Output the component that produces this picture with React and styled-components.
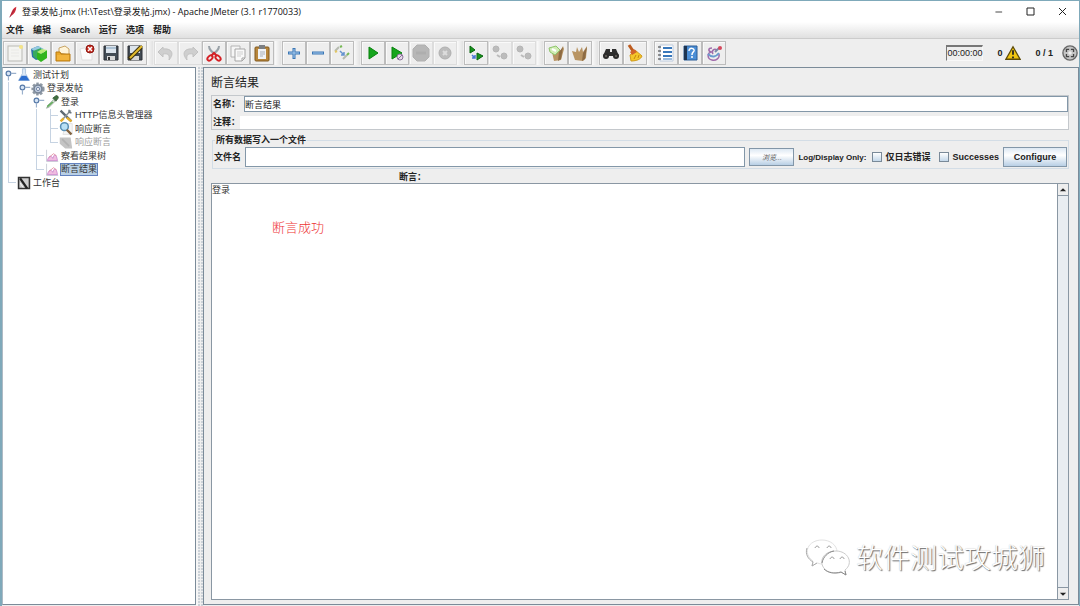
import { useState } from 'react';

import styled, { createGlobalStyle, css } from 'styled-components';

const GlobalStyle = createGlobalStyle`
    *, *::before, *::after {
        box-sizing: border-box;
    }

    body {
        background-color: #eeeeee;
        color: #222222;
        font-family: "Liberation Sans", "Noto Sans CJK SC", sans-serif;
        font-size: 9px;
        line-height: 13px;
        margin: 0;
    }

    button, input, textarea {
        color: inherit;
        font: inherit;
        margin: 0;
    }
`;

const Window = styled.div`
    border: solid #7fa9ba;
    border-width: 1px 1px 0 2px;
    display: flex;
    flex-direction: column;
    min-height: 100vh;
`;

const TitleBar = styled.header`
    align-items: center;
    background-color: #ffffff;
    display: flex;
    gap: 3px;
    height: 21px;
    padding-left: 5px;

    h1 {
        color: #111111;
        flex: 1;
        font-family: "Open Sans", "Noto Sans CJK SC", sans-serif;
        font-size: 9px;
        font-weight: 400;
        margin: 0;
    }
`;

const WindowButton = styled.button`
    background: none;
    border: 0;
    display: grid;
    height: 20px;
    padding: 0;
    place-items: center;
    width: 27px;
`;

const WindowButtons = styled.div`
    display: flex;
    gap: 5px;
    padding-right: 3px;
`;

const MenuBar = styled.nav`
    background-image: linear-gradient(#ffffff, #e0e0e0);
    border-bottom: 1px solid #cccccc;
    display: flex;
    gap: 9px;
    height: 17px;
    padding-left: 4px;

    button {
        background: none;
        border: 0;
        font-weight: 700;
        line-height: 15px;
        padding: 0;
    }
`;

const ToolBar = styled.div`
    align-items: center;
    background-color: #eeeeee;
    display: flex;
    gap: 7px;
    height: 28px;
    padding: 0 1px;
`;

const ToolGroup = styled.div`
    display: flex;
    position: relative;

    &:nth-child(3n) {
        margin-left: 1px;
    }

    & + &::before {
        background-image: linear-gradient(90deg, #fafafa, #e2e2e2);
        content: "";
        height: 24px;
        left: -7px;
        position: absolute;
        width: 6px;
    }
`;

const ToolButton = styled.button`
    background-color: #eeeeee;
    border: 1px solid #bcbcbc;
    box-shadow: inset 1px 1px 0 #fafafa;
    display: grid;
    height: 24px;
    padding: 0;
    place-items: center;
    width: 24px;

    &:disabled {
        border-color: #dddddd;
    }
`;

const Status = styled.div`
    align-items: center;
    display: flex;
    font-weight: 700;
    gap: 14px;
    margin-left: auto;
`;

const Counter = styled.span`
    align-items: center;
    display: flex;
    gap: ${({ $gap }) => $gap}px;
`;

const Timer = styled.output`
    border: solid;
    border-color: #777777 #f8f8f8 #f8f8f8 #777777;
    border-width: 2px 1px 1px 1px;
    font-weight: 400;
    line-height: 13px;
    width: 37px;
`;

const Body = styled.div`
    display: flex;
    flex: 1;
`;

const TreePanel = styled.aside`
    background-color: #ffffff;
    border: 1px solid #7b8b99;
    border-left-color: #aebac4;
    margin-bottom: 1px;
    width: 194px;
`;

const Tree = styled.ul`
    color: #333333;
    list-style: none;
    margin: 0;
    padding: 0;
`;

const TreeRow = styled.li`
    align-items: center;
    display: flex;
    height: 13px;

    &:nth-child(odd) {
        height: 14px;
    }

    button {
        background-color: ${({ $selected }) => $selected ? '#b8cfe5' : 'transparent'};
        border: 1px solid ${({ $selected }) => $selected ? '#6382bf' : 'transparent'};
        color: ${({ $disabled }) => $disabled ? '#a0a0a0' : 'inherit'};
        line-height: 11px;
        padding: 0;
        white-space: nowrap;
    }

    > svg {
        flex: none;
        margin-right: 1px;
    }
`;

const Guide = styled.span`
    align-self: stretch;
    background-repeat: no-repeat;
    flex: none;
    width: 14px;

    ${({ $kind }) => $kind === 'line' && css`
        background-image: linear-gradient(#c6d3e2, #c6d3e2);
        background-position: 5px 0;
        background-size: 1px 100%;
    `}

    ${({ $kind }) => $kind === 'tee' && css`
        background-image: linear-gradient(#c6d3e2, #c6d3e2), linear-gradient(#c6d3e2, #c6d3e2);
        background-position: 5px 0, 5px 6px;
        background-size: 1px 100%, 8px 1px;
    `}

    ${({ $kind }) => $kind === 'end' && css`
        background-image: linear-gradient(#c6d3e2, #c6d3e2), linear-gradient(#c6d3e2, #c6d3e2);
        background-position: 5px 0, 5px 6px;
        background-size: 1px 7px, 8px 1px;
    `}
`;

const Splitter = styled.div`
    background-color: #f0f0f0;
    background-image: radial-gradient(circle at 1px 1px, #ccd2d8 1px, transparent 1px);
    background-size: 3px 3px;
    border-left: 2px solid #f6f6f6;
    width: 7px;
`;

const Main = styled.main`
    border: 1px solid #7b8b99;
    display: flex;
    flex: 1;
    flex-direction: column;
    margin-bottom: 1px;
    padding: 6px 9px 4px 7px;

    h2 {
        font-size: 12px;
        font-weight: 400;
        line-height: 19px;
        margin: 0 0 2px;
    }
`;

const NamePanel = styled.div`
    border: 1px solid #c4c8cc;
    display: grid;
    row-gap: 4px;
`;

const Field = styled.div`
    align-items: center;
    display: flex;
    font-weight: 700;
    gap: ${({ $gap }) => $gap}px;
    padding-left: 1px;
`;

const TextInput = styled.input`
    background-color: #ffffff;
    border: ${({ $plain }) => $plain ? '0' : '1px solid #8397a8'};
    flex: 1;
    font-weight: 400;
    height: ${({ $height }) => $height}px;
    min-width: 0;
    outline: 0;
    padding: 0;
`;

const FilePanel = styled.fieldset`
    border: 1px solid #d3dde6;
    margin: 4px 0 0 1px;
    min-width: 0;
    padding: 0 1px 1px 0;

    legend {
        font-weight: 700;
        line-height: 13px;
        margin-left: 2px;
        padding: 0 1px;
    }
`;

const FileRow = styled.div`
    align-items: center;
    display: flex;
    font-weight: 700;
    gap: 4px;
    padding-left: 1px;
    white-space: nowrap;

    label {
        align-items: center;
        display: flex;
        gap: 3px;
    }

    label + label {
        margin-left: 5px;
    }
`;

const Caption = styled.span`
    font-size: 8px;
    margin-right: 2px;
`;

const CheckBox = styled.input`
    appearance: none;
    background-image: linear-gradient(#ffffff, #c4d8ea);
    border: 1px solid #7a8a99;
    height: 10px;
    width: 10px;

    &:checked {
        background: #33506d;
        box-shadow: inset 0 0 0 2px #ffffff;
    }
`;

const SwingButton = styled.button`
    background-image: linear-gradient(#dde8f3, #ffffff 40%, #b8cfe5);
    border: 1px solid #8296a8;
    font-weight: ${({ $small }) => $small ? 400 : 700};
    height: ${({ $small }) => $small ? 18 : 20}px;
    padding: 0;
    width: ${({ $small }) => $small ? 45 : 64}px;

    span {
        color: #555555;
        font-size: 7px;
        font-style: italic;
    }
`;

const ResultLabel = styled.label`
    font-weight: 700;
    line-height: 12px;
    padding: 2px 0 0 188px;
`;

const ResultPane = styled.div`
    border: 1px solid #8a97a3;
    display: flex;
    flex: 1;
    position: relative;

    textarea {
        background-color: #ffffff;
        border: 0;
        color: #333333;
        flex: 1;
        outline: 0;
        padding: 0;
        resize: none;
    }
`;

const ScrollBar = styled.div`
    background-color: #e9edf1;
    border-left: 1px solid #8a97a3;
    display: flex;
    flex-direction: column;
    justify-content: space-between;
    width: 11px;

    button {
        background-color: #eeeeee;
        border: 0 solid #8a97a3;
        display: grid;
        height: 12px;
        padding: 0;
        place-items: center;
    }

    button:first-child {
        border-bottom-width: 1px;
    }

    button:last-child {
        border-top-width: 1px;
    }
`;

const Note = styled.p`
    color: #ee3333;
    font-family: "Noto Sans CJK SC", sans-serif;
    font-size: 13px;
    font-weight: 300;
    left: 60px;
    line-height: 20px;
    margin: 0;
    position: absolute;
    top: 33px;
`;

const Watermark = styled.div`
    align-items: center;
    bottom: 22px;
    display: flex;
    gap: 5px;
    position: absolute;
    right: 23px;

    p {
        color: #ffffff;
        font-family: "Noto Sans CJK SC", sans-serif;
        font-size: 27px;
        font-weight: 300;
        line-height: 36px;
        margin: 0;
        text-shadow: 1px 1px 1px #666666, 0 0 1px #bbbbbb;
    }
`;

const icons = {
    feather: (
        <>
            <path d="M14 1C9 3 7 8 5 14l-1 3 2-2c5-3 8-8 8-14z" fill="#d22f3a" />
            <path d="M11 5 4 17" stroke="#8b2144" />
        </>
    ),
    file: (
        <>
            <rect x="2" y="2" width="14" height="15" fill="#f4f4f1" stroke="#b9b9b4" />
            <path d="M5 6h8M5 9h8M5 12h8" stroke="#e9e9e6" />
            <circle cx="15" cy="3" r="2" fill="#f5e487" />
        </>
    ),
    templates: (
        <>
            <path d="M1 5l7-3 5 3v9l-7 2-4-3z" fill="#2a72a8" />
            <path d="M1 5l7-3 6 3-8 3z" fill="#95c9e0" />
            <path d="M3 7l8-3 2 4-7 7-3-3z" fill="#38a95f" />
            <path d="M7 8l4 2 6-4v8l-6 4-4-3z" fill="#31b51d" />
            <path d="M7 8l5-3 5 1-6 4z" fill="#b5ec76" />
        </>
    ),
    open: (
        <>
            <path d="M5 9V4l6-2 4 3v6z" fill="#fff4d8" stroke="#c8a566" />
            <path d="M2 8h4l1 2h9v7H2z" fill="#e9a829" stroke="#b97a15" />
            <path d="M3 11h12v5H3z" fill="#f2b43c" />
        </>
    ),
    close: (
        <>
            <path d="M2 5l12-3v14H4z" fill="#fbfbfb" stroke="#dddddd" />
            <circle cx="12" cy="5" r="4" fill="#c3281d" stroke="#8d1710" />
            <path d="M10 3l4 4m0-4-4 4" stroke="#ffffff" strokeWidth="1.5" />
        </>
    ),
    save: (
        <>
            <path d="M2 2h14v14H2z" fill="#424b54" stroke="#2a2f35" />
            <path d="M4 2h10v7H4z" fill="#dce4ec" />
            <path d="M4 4h10" stroke="#7fa0bd" />
            <path d="M5 12h8v4H5z" fill="#d7d7d7" />
            <path d="M6 13h2v3H6z" fill="#333333" />
        </>
    ),
    saveAs: (
        <>
            <path d="M2 2h14v14H2z" fill="#424b54" stroke="#2a2f35" />
            <path d="M4 2h10v7H4z" fill="#dce4ec" />
            <path d="M5 12h8v4H5z" fill="#d7d7d7" />
            <path d="M3 15 15 3" stroke="#3d3210" strokeWidth="4" />
            <path d="M4 14 16 2" stroke="#e4bd2f" strokeWidth="2" />
        </>
    ),
    undo: <path d="M6 3 1 8l5 5v-3c5-1 7 1 6 6 6-7 2-12-6-11z" fill="#cfcfcf" stroke="#c2c2c2" />,
    redo: <path d="m12 3 5 5-5 5v-3c-5-1-7 1-6 6-6-7-2-12 6-11z" fill="#cfcfcf" stroke="#c2c2c2" />,
    cut: (
        <>
            <path d="M4 2c0 4 3 6 7 9M14 2c0 4-3 6-7 9" stroke="#9aa2a8" strokeWidth="2" />
            <ellipse cx="5" cy="14" rx="2" ry="3" transform="rotate(45 5 14)" stroke="#d52025" strokeWidth="2" />
            <ellipse cx="13" cy="14" rx="2" ry="3" transform="rotate(-45 13 14)" stroke="#d52025" strokeWidth="2" />
            <path d="M6 12l3-3 3 3" stroke="#d52025" strokeWidth="2" />
        </>
    ),
    copy: (
        <>
            <path d="M2 2h9v11H2z" fill="#f6f6f6" stroke="#b4b4b4" />
            <path d="M6 5h10v9l-3 3H6z" fill="#fafafa" stroke="#a5a5a5" />
            <path d="M8 8h6M8 10h6M8 12h4" stroke="#cfcfcf" />
            <path d="M13 17v-3h3" stroke="#a5a5a5" />
        </>
    ),
    paste: (
        <>
            <rect x="2" y="3" width="14" height="14" rx="1" fill="#b8863b" stroke="#80581e" />
            <path d="M5 5h8v10H5z" fill="#f1f3f6" />
            <path d="M6 1h6v4H6z" fill="#7c7f83" />
            <path d="M7 8h5M7 10h5M7 12h3" stroke="#a9afb8" />
        </>
    ),
    plus: (
        <>
            <path d="M9 4v11M3 9h12" stroke="#3b77b5" strokeWidth="3" />
            <path d="M9 5v9M4 9h10" stroke="#a9cdf0" />
        </>
    ),
    minus: (
        <>
            <path d="M3 9h12" stroke="#3b77b5" strokeWidth="3" />
            <path d="M4 9h10" stroke="#a9cdf0" />
        </>
    ),
    toggle: (
        <>
            <path d="m2 7 4-4M10 15l4-4" stroke="#b6bbb0" strokeWidth="2" />
            <path d="m7 3 2-1M14 11l2-2" stroke="#77b955" strokeWidth="2" />
            <path d="m2 8 2-1" stroke="#e1c665" strokeWidth="2" />
            <path d="m7 7 4 4M11 8v3H8" stroke="#6593cf" strokeWidth="1.5" />
        </>
    ),
    play: <path d="M5 3v12l9-6z" fill="#16a51d" stroke="#08820d" />,
    playNow: (
        <>
            <path d="M4 3v12l10-6z" fill="#16a51d" stroke="#08820d" />
            <circle cx="12" cy="13" r="3" fill="#e5dae8" stroke="#8c719b" />
            <path d="m10 15 4-4" stroke="#8c719b" />
        </>
    ),
    stop: (
        <>
            <path d="M5 1h8l4 4v8l-4 4H5l-4-4V5z" fill="#b7b7b7" stroke="#b0b0b0" />
            <path d="M4 9h10" stroke="#aeaeae" strokeWidth="3" />
        </>
    ),
    shutdown: (
        <>
            <circle cx="9" cy="9" r="6" fill="#bcbcbc" stroke="#b0b0b0" />
            <path d="m7 7 4 4m0-4-4 4" stroke="#dddddd" strokeWidth="2" />
        </>
    ),
    remoteStart: (
        <>
            <path d="M3 2v7l5-3zM10 9v7l6-4z" fill="#16941b" stroke="#07650c" />
            <path d="m5 11 3 3M8 11v3H5" stroke="#4b77d1" strokeWidth="1.5" />
        </>
    ),
    remoteStop: (
        <>
            <circle cx="5" cy="5" r="3" fill="#bcbcbc" stroke="#b6b6b6" />
            <circle cx="13" cy="12" r="3" fill="#bcbcbc" stroke="#b6b6b6" />
            <path d="m6 11 3 2" stroke="#bbbbbb" strokeWidth="2" />
        </>
    ),
    clear: (
        <>
            <path d="M5 8l9-2 2-4 1 3-3 11-7 1z" fill="#b89463" />
            <path d="M12 8l4-5-2 12-3 2z" fill="#8d6b43" />
            <path d="M2 4l7-2 4 4-5 5-5-3z" fill="#d0edb5" stroke="#8fc56c" />
            <path d="M5 5l4 2" stroke="#ffffff" strokeWidth="2" />
        </>
    ),
    clearAll: (
        <>
            <path d="M1 7l3 9 8 1 3-3 1-12-4 6-1-5-3 5-2-5-1 5z" fill="#b89463" />
            <path d="M12 9l4-6-2 12-3 2z" fill="#8d6b43" />
        </>
    ),
    search: (
        <>
            <path d="M4 5h4v3h2V5h4l3 7H1z" fill="#2e2e2e" />
            <circle cx="4" cy="12" r="3" fill="#2b2b2b" />
            <circle cx="14" cy="12" r="3" fill="#2b2b2b" />
            <circle cx="4" cy="12" r="1" fill="#6c6660" />
            <circle cx="14" cy="12" r="1" fill="#6c6660" />
        </>
    ),
    broom: (
        <>
            <path d="m3 1 4 6" stroke="#bd5c1f" strokeWidth="3" />
            <path d="M9 6l7 6c-1 3-5 5-11 5l-1-6c2-1 3-3 5-5z" fill="#f4c62a" stroke="#d09a1c" />
            <path d="m4 8 4-3 3 3-5 3z" fill="#d1632a" />
            <path d="m8 15 2-4M12 14l1-3" stroke="#c4860f" />
        </>
    ),
    functions: (
        <>
            <path d="M3 1h13v16H3z" fill="#ffffff" stroke="#bccadd" />
            <path d="M6 4h9M6 8h9M6 12h9" stroke="#3978bb" strokeWidth="2" />
            <path d="M6 15h9" stroke="#3978bb" />
            <path d="M1 3h3M1 7h3M1 11h3M1 15h3" stroke="#333333" />
        </>
    ),
    help: (
        <>
            <path d="M3 2h13v14H3z" fill="#4b8ed6" stroke="#2a5c96" />
            <path d="M3 2h3v14H3z" fill="#1e3450" />
            <path d="M8 7c0-4 6-3 5 0-1 2-2 1-2 4M11 12v2" stroke="#ffffff" strokeWidth="1.5" />
        </>
    ),
    plugins: (
        <>
            <path d="M7 4c-4 0-4 3-1 4-4 1-4 7 1 8 4 1 8-2 7-6M12 6C9 4 6 7 8 10" stroke="#a06cab" strokeWidth="1.5" />
            <path d="M3 10c4 4 8 3 11-1" stroke="#6b9bcf" strokeWidth="2" />
            <path d="m10 8 4-4" stroke="#7b89a8" strokeWidth="2" />
            <circle cx="15" cy="4" r="2" fill="#d4475d" />
        </>
    ),
    warning: (
        <>
            <path d="M9 2 1 16h16z" fill="#f1c510" stroke="#5e4c08" strokeWidth="1.5" />
            <path d="M9 6v5M9 13v2" stroke="#222222" strokeWidth="2" />
        </>
    ),
    target: (
        <>
            <circle cx="9" cy="9" r="8" fill="#c4c4c4" stroke="#666666" strokeWidth="1.5" />
            <path d="M5 8V5h3M10 5h3v3M5 10v3h3M13 10v3h-3" stroke="#444444" strokeWidth="1.5" />
            <circle cx="9" cy="9" r="2" fill="#eeeeee" />
        </>
    ),
    flask: (
        <>
            <path d="M7 1h4v6l5 9H2l5-9z" fill="#dce9f7" stroke="#a5bdd8" />
            <path d="M6 10h6l4 6H2z" fill="#2c6ed0" />
        </>
    ),
    gear: (
        <>
            <circle cx="9" cy="9" r="7" fill="#9ba5b2" stroke="#8d97a2" strokeWidth="3" strokeDasharray="3 2" />
            <circle cx="9" cy="9" r="5" fill="#bfcbdc" stroke="#58677c" />
            <circle cx="9" cy="9" r="2" fill="#ffffff" stroke="#52688f" />
        </>
    ),
    dropper: (
        <>
            <path d="m2 17 2-4 7-7 2 2-7 7z" fill="#d4e3d4" stroke="#8d9c91" />
            <path d="m10 4 4 4 3-4c1-2-2-4-3-3z" fill="#3f7040" stroke="#335433" />
            <path d="m3 15 7-6" stroke="#61ad59" strokeWidth="2" />
        </>
    ),
    tools: (
        <>
            <path d="M2 2l14 14" stroke="#5e6972" strokeWidth="3" />
            <path d="M15 2 3 15" stroke="#8d9499" strokeWidth="2" />
            <path d="m10 11 6 5M2 16l4-4" stroke="#e5af2d" strokeWidth="3" />
            <path d="M13 1v3l3 1" stroke="#6c7880" strokeWidth="2" />
        </>
    ),
    lens: (
        <>
            <path d="M9 2h8v14H5z" fill="#f5f5f5" stroke="#dddddd" />
            <circle cx="7" cy="6" r="5" fill="#b9e0f5" stroke="#5b91b5" strokeWidth="2" />
            <path d="m10 10 6 6" stroke="#82623f" strokeWidth="3" />
        </>
    ),
    lensOff: (
        <>
            <path d="M1 2h14l2 14H8L1 10z" fill="#c4c4c4" />
            <path d="m4 4 9 9" stroke="#b2b2b2" strokeWidth="2" />
        </>
    ),
    graph: (
        <>
            <path d="M2 1v15h15" stroke="#bfc5ce" />
            <path d="M3 15c2-7 5-7 7-3 2-7 5-5 6 3z" fill="#f0bce0" stroke="#c47fca" />
            <path d="m5 11 6-5 4 3" stroke="#e0859a" />
        </>
    ),
    workbench: (
        <>
            <path d="M2 2h14v14H2z" fill="#cfcfcf" stroke="#333333" strokeWidth="2" />
            <path d="m4 3 9 13" stroke="#222222" strokeWidth="3" />
            <path d="m4 9 4 6" stroke="#ffffff" />
        </>
    ),
    handle: (
        <>
            <circle cx="7" cy="7" r="3" fill="#d7e5f5" stroke="#5579a8" strokeWidth="1.5" />
            <path d="M7 10v6M10 7h7" stroke="#9ab0cc" strokeWidth="1.5" />
        </>
    ),
    minimize: <path d="M1 9h15" stroke="#333333" strokeWidth="2" />,
    maximize: <path d="M2 2h14v14H2z" stroke="#222222" strokeWidth="2" />,
    exit: <path d="m2 2 14 14M16 2 2 16" stroke="#222222" strokeWidth="2" />,
    up: <path d="M2 12h14L9 5z" fill="#222222" />,
    down: <path d="M2 6h14l-7 7z" fill="#222222" />,
};

const Icon = ({ name, size = 18 }) => (
    <svg width={size} height={size} viewBox="0 0 18 18" fill="none" aria-hidden="true">
        {icons[name]}
    </svg>
);

const menus = ['文件', '编辑', 'Search', '运行', '选项', '帮助'];

const toolGroups = [
    [['file', 'New'], ['templates', 'Templates'], ['open', 'Open'], ['close', 'Close'], ['save', 'Save'], ['saveAs', 'Save as']],
    [['undo', 'Undo', true], ['redo', 'Redo', true], ['cut', 'Cut'], ['copy', 'Copy'], ['paste', 'Paste']],
    [['plus', 'Expand all'], ['minus', 'Collapse all'], ['toggle', 'Toggle']],
    [['play', 'Start'], ['playNow', 'Start no pauses'], ['stop', 'Stop', true], ['shutdown', 'Shutdown', true]],
    [['remoteStart', 'Remote start all'], ['remoteStop', 'Remote stop all', true], ['remoteStop', 'Remote shutdown all', true]],
    [['clear', 'Clear'], ['clearAll', 'Clear all']],
    [['search', 'Search'], ['broom', 'Reset search']],
    [['functions', 'Function helper'], ['help', 'Help'], ['plugins', 'Plugins']],
];

const treeRows = [
    { label: '测试计划', icon: 'flask', guides: ['handle'] },
    { label: '登录发帖', icon: 'gear', guides: ['line', 'handle'] },
    { label: '登录', icon: 'dropper', guides: ['line', 'none', 'handle'] },
    { label: 'HTTP信息头管理器', icon: 'tools', guides: ['line', 'none', 'line', 'tee'] },
    { label: '响应断言', icon: 'lens', guides: ['line', 'none', 'line', 'tee'] },
    { label: '响应断言', icon: 'lensOff', guides: ['line', 'none', 'line', 'end'], disabled: true },
    { label: '察看结果树', icon: 'graph', guides: ['line', 'none', 'tee'] },
    { label: '断言结果', icon: 'graph', guides: ['line', 'none', 'end'] },
    { label: '工作台', icon: 'workbench', guides: ['end'] },
];

const TestTree = () => {
    const [selected, setSelected] = useState(7);

    return (
        <Tree>
            {treeRows.map(({ label, icon, guides, disabled }, index) => (
                <TreeRow key={index} $selected={index === selected} $disabled={disabled}>
                    {guides.map((kind, level) => (
                        <Guide key={level} $kind={kind}>
                            {kind === 'handle' && <Icon name="handle" size={14} />}
                        </Guide>
                    ))}
                    <Icon name={icon} size={14} />
                    <button type="button" onClick={() => setSelected(index)}>{label}</button>
                </TreeRow>
            ))}
        </Tree>
    );
}

const WeChatLogo = () => (
    <svg width="46" height="40" viewBox="0 0 46 40" fill="none" aria-hidden="true">
        <path d="M17 27c-2 0-4-1-5-1l-5 3 1-5C-3 16 3 3 17 3c8 0 15 5 15 12" stroke="#e2e2e2" />
        <path d="M2 11c-2 6 1 11 6 14l-1 4 5-3" stroke="#aaaaaa" />
        <path d="M31 14c-19 0-19 22 0 22 2 0 4 0 5-1l5 3-1-5c9-7 3-19-9-19z" fill="#ffffff" stroke="#cccccc" />
        <path d="M17 26c1-6 6-11 12-12M19 32c4 4 10 5 17 3l5 3-1-4" stroke="#888888" />
        <path d="M10 11c1-3 4-2 4 0M22 11c1-3 4-2 4 0M25 22c1-3 4-2 4 0M35 22c1-3 4-2 4 0" stroke="#999999" />
    </svg>
);

const App = () => {
    const [name, setName] = useState('断言结果');

    return (
        <Window>
            <GlobalStyle />
            <TitleBar>
                <Icon name="feather" size={12} />
                <h1>登录发帖.jmx (H:\Test\登录发帖.jmx) - Apache JMeter (3.1 r1770033)</h1>
                <WindowButtons>
                    <WindowButton aria-label="Minimize"><Icon name="minimize" size={8} /></WindowButton>
                    <WindowButton aria-label="Maximize"><Icon name="maximize" size={9} /></WindowButton>
                    <WindowButton aria-label="Close"><Icon name="exit" size={9} /></WindowButton>
                </WindowButtons>
            </TitleBar>
            <MenuBar>
                {menus.map(menu => <button key={menu} type="button">{menu}</button>)}
            </MenuBar>
            <ToolBar>
                {toolGroups.map((group, index) => (
                    <ToolGroup key={index}>
                        {group.map(([icon, title, disabled]) => (
                            <ToolButton key={title} type="button" title={title} aria-label={title} disabled={disabled}>
                                <Icon name={icon} />
                            </ToolButton>
                        ))}
                    </ToolGroup>
                ))}
                <Status>
                    <Timer>00:00:00</Timer>
                    <Counter $gap={3}>0 <Icon name="warning" size={16} /></Counter>
                    <Counter $gap={9}>0 / 1 <Icon name="target" size={16} /></Counter>
                </Status>
            </ToolBar>
            <Body>
                <TreePanel>
                    <TestTree />
                </TreePanel>
                <Splitter />
                <Main>
                    <h2>断言结果</h2>
                    <NamePanel>
                        <Field $gap={4}>
                            <label htmlFor="name">名称：</label>
                            <TextInput id="name" $height={16} value={name} onChange={e => setName(e.target.value)} />
                        </Field>
                        <Field $gap={0}>
                            <label htmlFor="comment">注释：</label>
                            <TextInput id="comment" $height={13} $plain />
                        </Field>
                    </NamePanel>
                    <FilePanel>
                        <legend>所有数据写入一个文件</legend>
                        <FileRow>
                            <label htmlFor="filename">文件名</label>
                            <TextInput id="filename" $height={20} />
                            <SwingButton type="button" $small><span>浏览...</span></SwingButton>
                            <Caption>Log/Display Only:</Caption>
                            <label><CheckBox type="checkbox" />仅日志错误</label>
                            <label><CheckBox type="checkbox" />Successes</label>
                            <SwingButton type="button">Configure</SwingButton>
                        </FileRow>
                    </FilePanel>
                    <ResultLabel htmlFor="result">断言：</ResultLabel>
                    <ResultPane>
                        <textarea id="result" defaultValue="登录" spellCheck="false" />
                        <ScrollBar>
                            <button type="button" aria-label="Scroll up"><Icon name="up" size={8} /></button>
                            <button type="button" aria-label="Scroll down"><Icon name="down" size={8} /></button>
                        </ScrollBar>
                        <Note>断言成功</Note>
                        <Watermark>
                            <WeChatLogo />
                            <p>软件测试攻城狮</p>
                        </Watermark>
                    </ResultPane>
                </Main>
            </Body>
        </Window>
    );
}

export default App
